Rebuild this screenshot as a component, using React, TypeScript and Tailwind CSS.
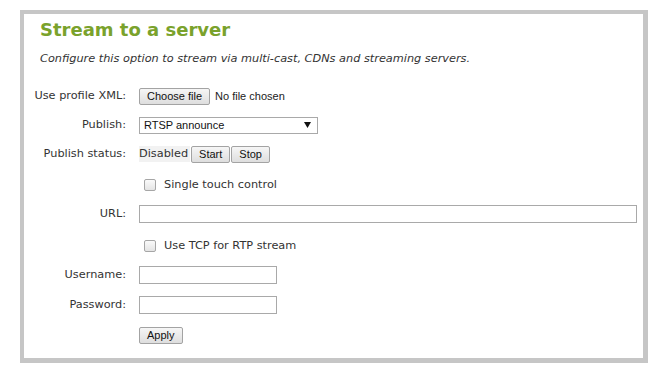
import React from 'react';

const font = { fontFamily: '"DejaVu Sans", Verdana, sans-serif' };

const Label = ({ children }: { children: React.ReactNode }) => (
  <div className="w-[115px] shrink-0 whitespace-nowrap pr-[13px] text-right text-[11.3px] text-[#333]">{children}</div>
);

const Btn = ({ children, className = '' }: { children: React.ReactNode; className?: string }) => (
  <button
    className={`h-[17px] rounded-[2px] border border-[#a3a3a3] bg-gradient-to-b from-[#f6f6f6] to-[#dedede] px-[7px] font-['Liberation_Sans',Arial,sans-serif] text-[11px] leading-[15px] text-[#111] ${className}`}
  >
    {children}
  </button>
);

const Checkbox = () => (
  <span className="inline-block h-[12px] w-[12px] rounded-[2px] border border-[#a6a6a6] bg-gradient-to-b from-[#fafafa] to-[#e4e4e4]" />
);

const TextBox = ({ w }: { w: string }) => (
  <div className={`h-[18px] border border-[#a9a9a9] bg-white ${w}`} />
);

const App = () => {
  return (
    <div className="h-[377px] w-[659px] bg-white pl-[20px] pt-[10px]" style={font}>
      <div className="h-[353px] w-[628px] border-b-[5px] border-l-4 border-r-[5px] border-t-4 border-[#c6c6c6] bg-white">
        {/* Heading */}
        <div className="pl-[16px] pt-[5px]">
          <h1 className="text-[18px] font-bold leading-[22px] text-[#7aa22c]">Stream to a server</h1>
          <p className="mt-[11px] text-[11.3px] italic leading-[14px] text-[#333]">
            Configure this option to stream via multi-cast, CDNs and streaming servers.
          </p>
        </div>

        {/* Form */}
        <div className="mt-[21px] flex flex-col">
          <div className="flex h-[18px] items-center">
            <Label>Use profile XML:</Label>
            <Btn className="px-[6px]">Choose file</Btn>
            <span className="ml-[5px] font-['Liberation_Sans',Arial,sans-serif] text-[11px] text-[#222]">No file chosen</span>
          </div>

          <div className="mt-[11px] flex h-[18px] items-center">
            <Label>Publish:</Label>
            <div className="flex h-[17px] w-[179px] items-center justify-between border border-[#a9a9a9] bg-white pl-[4px] pr-[6px] font-['Liberation_Sans',Arial,sans-serif] text-[11px] text-[#111]">
              <span>RTSP announce</span>
              <svg width="7" height="6" viewBox="0 0 7 6">
                <path d="M0 0h7L3.5 6z" fill="#111" />
              </svg>
            </div>
          </div>

          <div className="mt-[11px] flex h-[18px] items-center">
            <Label>Publish status:</Label>
            <span className="bg-[#f2f2f2] pr-[2px] text-[11.3px] text-[#333]">Disabled</span>
            <Btn className="ml-[1px]">Start</Btn>
            <Btn className="ml-[1px]">Stop</Btn>
          </div>

          <div className="mt-[13px] flex h-[18px] items-center">
            <div className="w-[115px] shrink-0" />
            <span className="ml-[5px] flex"><Checkbox /></span>
            <span className="ml-[8px] text-[11.3px] text-[#333]">Single touch control</span>
          </div>

          <div className="mt-[11px] flex h-[18px] items-center">
            <Label>URL:</Label>
            <TextBox w="w-[498px]" />
          </div>

          <div className="mt-[14px] flex h-[18px] items-center">
            <div className="w-[115px] shrink-0" />
            <span className="ml-[5px] flex"><Checkbox /></span>
            <span className="ml-[8px] text-[11.3px] text-[#333]">Use TCP for RTP stream</span>
          </div>

          <div className="mt-[11px] flex h-[18px] items-center">
            <Label>Username:</Label>
            <TextBox w="w-[138px]" />
          </div>

          <div className="mt-[12px] flex h-[18px] items-center">
            <Label>Password:</Label>
            <TextBox w="w-[138px]" />
          </div>

          <div className="mt-[12px] flex h-[18px] items-center">
            <div className="w-[115px] shrink-0" />
            <Btn>Apply</Btn>
          </div>
        </div>
      </div>
    </div>
  );
};

export default App;
